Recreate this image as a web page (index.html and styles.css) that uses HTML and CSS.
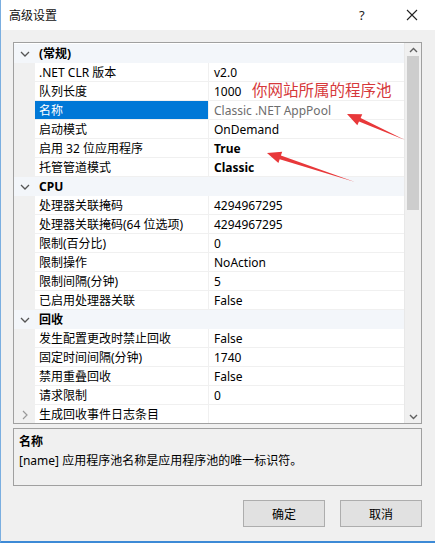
FILE: index.html
```html
<!DOCTYPE html>
<html>
<head>
<meta charset="utf-8">
<link rel="stylesheet" href="styles.css">
</head>
<body>
<div class="window">
  <div class="titlebar">
    <span class="title">高级设置</span>
    <span class="help">?</span>
    <span class="close"><svg width="12" height="12" viewBox="0 0 12 12"><path d="M1 1L11 11M11 1L1 11" stroke="#222" stroke-width="1.1" fill="none"/></svg></span>
  </div>
  <div class="body">
    <div class="grid">
      <div class="rows">
        <div class="row cat"><span class="gut"><svg width="10" height="6" viewBox="0 0 10 6"><path d="M1 1L5 5L9 1" stroke="#555" stroke-width="1.3" fill="none"/></svg></span><span class="name">(常规)</span><span class="val"></span></div>
        <div class="row"><span class="gut"></span><span class="name">.NET CLR 版本</span><span class="val">v2.0</span></div>
        <div class="row"><span class="gut"></span><span class="name">队列长度</span><span class="val">1000</span></div>
        <div class="row sel"><span class="gut"></span><span class="name">名称</span><span class="val ro">Classic .NET AppPool</span></div>
        <div class="row"><span class="gut"></span><span class="name">启动模式</span><span class="val">OnDemand</span></div>
        <div class="row"><span class="gut"></span><span class="name">启用 32 位应用程序</span><span class="val b">True</span></div>
        <div class="row"><span class="gut"></span><span class="name">托管管道模式</span><span class="val b">Classic</span></div>
        <div class="row cat"><span class="gut"><svg width="10" height="6" viewBox="0 0 10 6"><path d="M1 1L5 5L9 1" stroke="#555" stroke-width="1.3" fill="none"/></svg></span><span class="name">CPU</span><span class="val"></span></div>
        <div class="row"><span class="gut"></span><span class="name">处理器关联掩码</span><span class="val">4294967295</span></div>
        <div class="row"><span class="gut"></span><span class="name">处理器关联掩码(64 位选项)</span><span class="val">4294967295</span></div>
        <div class="row"><span class="gut"></span><span class="name">限制(百分比)</span><span class="val">0</span></div>
        <div class="row"><span class="gut"></span><span class="name">限制操作</span><span class="val">NoAction</span></div>
        <div class="row"><span class="gut"></span><span class="name">限制间隔(分钟)</span><span class="val">5</span></div>
        <div class="row"><span class="gut"></span><span class="name">已启用处理器关联</span><span class="val">False</span></div>
        <div class="row cat"><span class="gut"><svg width="10" height="6" viewBox="0 0 10 6"><path d="M1 1L5 5L9 1" stroke="#555" stroke-width="1.3" fill="none"/></svg></span><span class="name">回收</span><span class="val"></span></div>
        <div class="row"><span class="gut"></span><span class="name">发生配置更改时禁止回收</span><span class="val">False</span></div>
        <div class="row"><span class="gut"></span><span class="name">固定时间间隔(分钟)</span><span class="val">1740</span></div>
        <div class="row"><span class="gut"></span><span class="name">禁用重叠回收</span><span class="val">False</span></div>
        <div class="row"><span class="gut"></span><span class="name">请求限制</span><span class="val">0</span></div>
        <div class="row"><span class="gut"><svg width="6" height="10" viewBox="0 0 6 10"><path d="M1 1L5 5L1 9" stroke="#999" stroke-width="1.2" fill="none"/></svg></span><span class="name">生成回收事件日志条目</span><span class="val"></span></div>
      </div>
      <div class="scrollbar">
        <span class="sarrow"><svg width="9" height="6" viewBox="0 0 9 6"><path d="M1 5L4.5 1.5L8 5" stroke="#606060" stroke-width="1.4" fill="none"/></svg></span>
        <div class="track"><div class="thumb"></div></div>
        <span class="sarrow"><svg width="9" height="6" viewBox="0 0 9 6"><path d="M1 1L4.5 4.5L8 1" stroke="#606060" stroke-width="1.4" fill="none"/></svg></span>
      </div>
    </div>
    <div class="desc">
      <div class="dtitle">名称</div>
      <div class="dtext">[name] 应用程序池名称是应用程序池的唯一标识符。</div>
    </div>
    <div class="buttons">
      <button class="btn">确定</button>
      <button class="btn">取消</button>
    </div>
  </div>
  <div class="annot-text">你网站所属的程序池</div>
  <svg class="arrows" width="435" height="543" viewBox="0 0 435 543">
    <polygon fill="#e8383a" points="347,114 362.3,114.2 360.6,117.9 405,140 359.0,121.5 357.3,125.2"/>
    <polygon fill="#e8383a" points="267,153 282.2,151.7 280.9,155.5 355,182 279.7,159.3 278.4,163.1"/>
  </svg>
</div>
</body>
</html>
```
FILE: styles.css
```css
* { box-sizing: border-box; }
html, body { margin: 0; padding: 0; }
body {
  font-family: "Noto Sans", "Noto Sans CJK SC", sans-serif;
  font-size: 12px;
  color: #000;
}
.window {
  position: relative;
  width: 435px;
  height: 543px;
  background: #f0f0f0;
  border-left: 1px solid #7aaee0;
  border-bottom: 2px solid #3d8ad6;
  overflow: hidden;
}
.titlebar {
  height: 30px;
  background: #fff;
  display: flex;
  align-items: center;
  padding-left: 8px;
}
.title { flex: 1; font-size: 12px; color: #111; }
.help { width: 14px; font-size: 13px; margin-right: 33px; color: #222; }
.close { width: 12px; height: 12px; margin-right: 17px; display: flex; }
.body { padding: 12px 0 0 12px; }
.grid {
  width: 409px;
  height: 382px;
  border: 1px solid #a0a0a0;
  background: #fff;
  display: flex;
  overflow: hidden;
}
.rows { width: 390px; padding-top: 1px; }
.row {
  display: flex;
  height: 19px;
  line-height: 18px;
}
.gut {
  width: 21px;
  background: #f0f0f0;
  display: flex;
  align-items: center;
  justify-content: center;
  flex: none;
}
.name {
  width: 173px;
  flex: none;
  padding-left: 4px;
  padding-top: 1px;
  border-bottom: 1px solid #f0f0f0;
  white-space: nowrap;
  overflow: hidden;
}
.val {
  flex: 1;
  padding-left: 5px;
  padding-top: 1px;
  border-left: 1px solid #f0f0f0;
  border-bottom: 1px solid #f0f0f0;
  white-space: nowrap;
}
.cat .name, .cat .val { background: #f3f6fa; border-color: #f3f6fa; font-weight: bold; }
.cat .gut { background: #f3f6fa; }
.sel .name { background: #0078d7; color: #fff; }
.ro { color: #6d6d6d; }
.b { font-weight: bold; }
.scrollbar {
  width: 17px;
  background: #f0f0f0;
  display: flex;
  flex-direction: column;
  border-left: 1px solid #e8e8e8;
}
.sarrow { height: 13px; display: flex; align-items: center; justify-content: center; flex: none; }
.track { flex: 1; padding: 0 2px; }
.thumb { height: 154px; background: #cdcdcd; }
.desc {
  width: 409px;
  height: 58px;
  margin-top: 4px;
  border: 1px solid #a0a0a0;
  padding: 3px 5px 2px;
}
.dtitle { font-weight: bold; line-height: 19px; }
.dtext { line-height: 20px; }
.buttons {
  display: flex;
  justify-content: flex-end;
  gap: 15px;
  width: 409px;
  margin-top: 14px;
}
.btn {
  width: 82px;
  height: 27px;
  background: #e1e1e1;
  border: 1px solid #adadad;
  font-family: inherit;
  font-size: 12px;
  color: #000;
  padding: 0;
}
.annot-text {
  position: absolute;
  left: 251px;
  top: 79px;
  font-size: 15.5px;
  color: #d6393b;
  font-family: "Noto Sans CJK SC", sans-serif;
  line-height: 20px;
}
.arrows { position: absolute; left: -1px; top: 0; pointer-events: none; }
```
